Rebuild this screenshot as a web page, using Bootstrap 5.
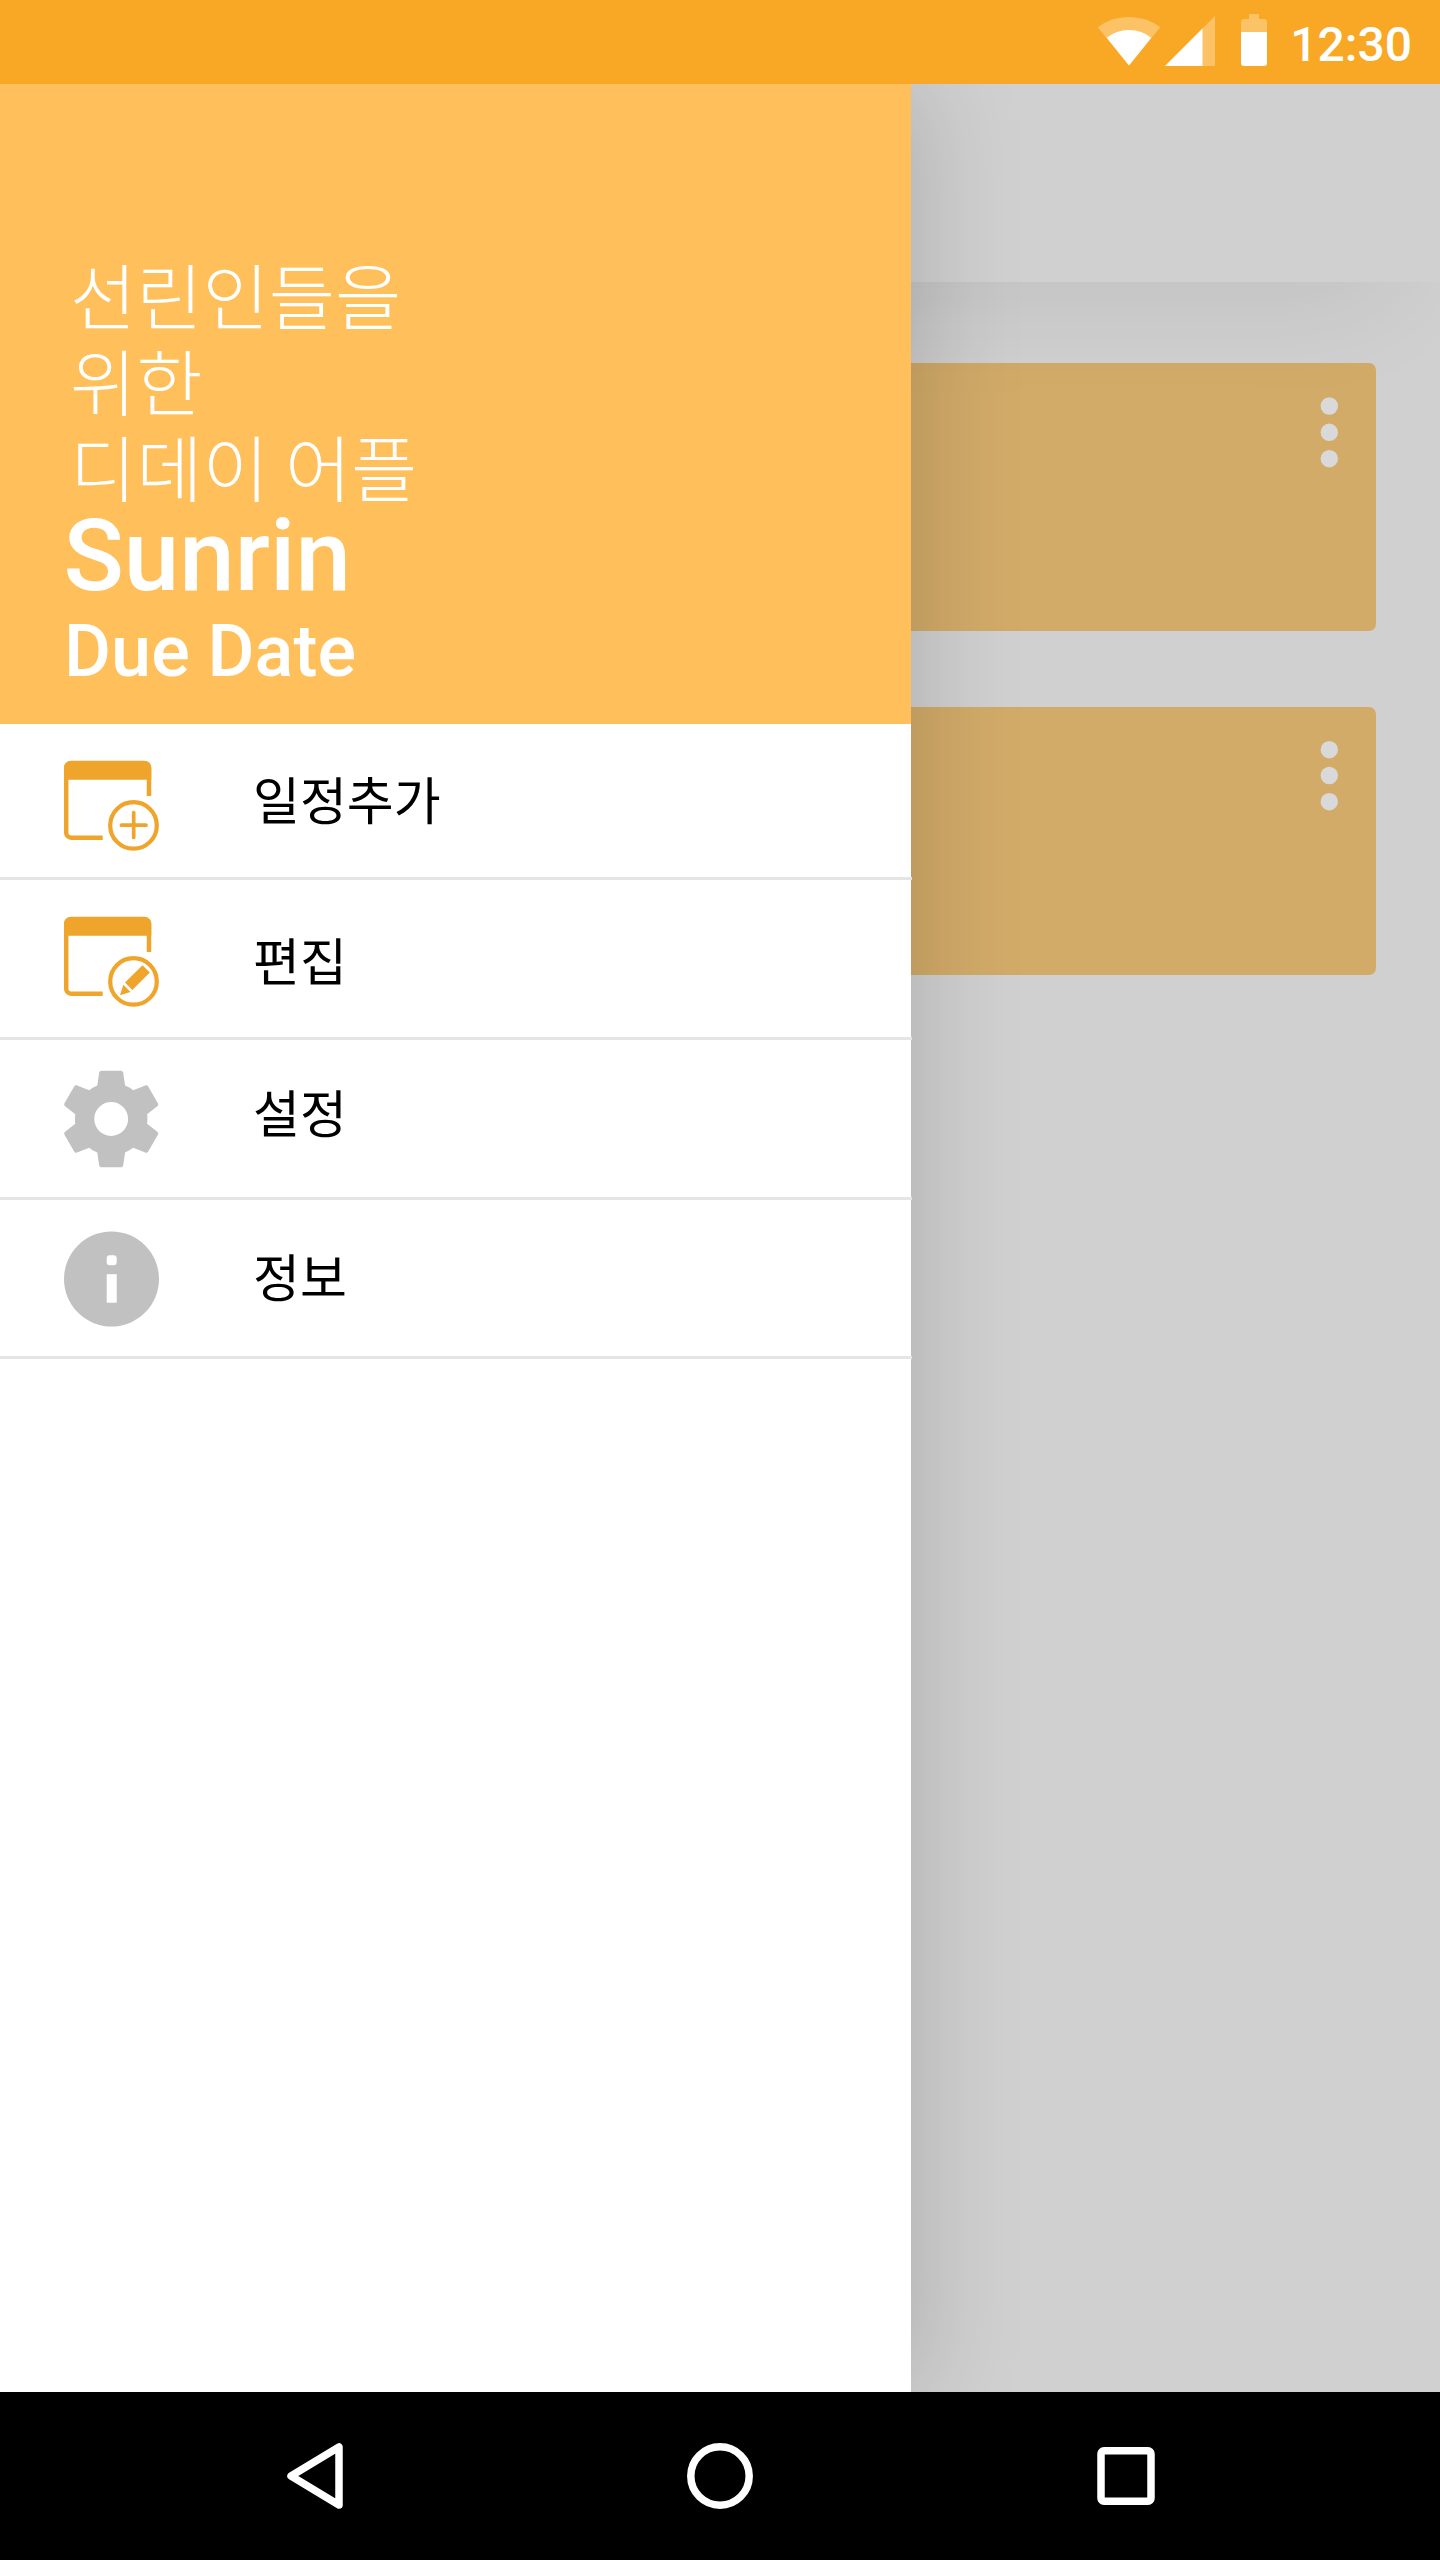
<!DOCTYPE html>
<html lang="ko">
<head>
<meta charset="utf-8">
<meta name="viewport" content="width=device-width, initial-scale=1">
<title>Sunrin Due Date</title>
<link href="https://cdn.jsdelivr.net/npm/bootstrap@5.3.0/dist/css/bootstrap.min.css" rel="stylesheet">
<style>
  body { font-family: Roboto, "Noto Sans CJK KR", sans-serif; background: #d0d0d0; }
  .phone { width: 1440px; height: 2560px; }
  .status-bar { height: 84px; background: #f9a825; padding-right: 28px; }
  .status-time { width: 141px; font-size: 48px; line-height: 84px; padding-top: 3px; }
  .app-bar { height: 198px; background: #d0d0d0; z-index: 1; }
  .bar-shade { position: absolute; top: 198px; left: 0; right: 0; height: 180px; overflow: hidden; pointer-events: none; }
  .bar-shade > div { width: 1390px; height: 198px; margin-top: -198px; box-shadow: 0 10px 120px rgba(0,0,0,.09); }
  .card-stack { padding: 81px 64px 0; gap: 76px; }
  .due-card { height: 268px; border-radius: 7px; background: #d2ab69; padding: 34px 38px 0 0; }
  .dots { width: 18px; }
  .drawer { width: 911px; z-index: 2; box-shadow: 6px 0 100px rgba(0,0,0,.17); }
  .drawer-head { height: 640px; background: #ffbf5a; padding: 166px 0 0 63.5px; }
  .tagline { font-family: "Noto Sans CJK KR", sans-serif; font-weight: 300; font-size: 72px; line-height: 86px; padding-left: 6.5px; word-spacing: -4px; }
  .brand { font-size: 99.7px; line-height: 100px; margin-top: -2px; }
  .brand-sub { font-size: 72px; line-height: 84px; margin-top: 4px; padding-left: .6px; }
  .menu-row { border-bottom: 3px solid #e5e5e5; width: 912px; padding-left: 64px; gap: 93px;
    font-family: "Noto Sans CJK KR", sans-serif; font-size: 51px; line-height: 60px; color: #000; height: 160px; }
  .menu-row svg { width: 96px; height: 98px; flex: none; margin-top: 1px; }
  .menu-row.first { height: 156px; }
  .menu-row.last { height: 159px; }
  .menu-row.first svg { margin-top: 5px; }
  .menu-row.first span, .menu-row.last span { margin-bottom: 6px; }
  .menu-row.settings span { margin-bottom: 16px; }
  .nav-keys { height: 168px; }
</style>
<script src="https://cdn.jsdelivr.net/npm/bootstrap@5.3.0/dist/js/bootstrap.bundle.min.js"></script>
</head>
<body>
<div class="phone d-flex flex-column overflow-hidden">
  <header class="status-bar d-flex justify-content-end text-white flex-shrink-0">
    <svg width="176" height="84" viewBox="1095 0 176 84" fill="#fff">
      <path opacity=".3" d="M1129 65.500L1097.700 27.300Q1111 17 1129 17T1160.300 27.300Z"/>
      <path d="M1129 65.500L1106.700 37.800Q1116 30 1129 30T1151.300 37.800Z"/>
      <path opacity=".3" d="M1165 66L1215 16V66Z"/>
      <path d="M1165 66L1202.500 28.500V66Z"/>
      <path opacity=".3" d="M1249 14h10v5h5a3 3 0 0 1 3 3v10h-26v-10a3 3 0 0 1 3-3h5z"/>
      <path d="M1241 32h26v31a3 3 0 0 1-3 3h-20a3 3 0 0 1-3-3z"/>
    </svg>
    <span class="status-time fw-medium text-end">12:30</span>
  </header>

  <main class="position-relative flex-grow-1 overflow-hidden">
    <div class="app-bar position-relative"><div class="bar-shade"><div></div></div></div>
    <section class="card-stack d-flex flex-column">
      <article class="due-card d-flex justify-content-end">
        <svg class="dots" height="72" viewBox="0 0 18 72" fill="#d9d9d9"><circle cx="9.300" cy="9" r="8.700"/><circle cx="9.300" cy="35.300" r="8.700"/><circle cx="9.300" cy="61.700" r="8.700"/></svg>
      </article>
      <article class="due-card d-flex justify-content-end">
        <svg class="dots" height="72" viewBox="0 0 18 72" fill="#d9d9d9"><circle cx="9.300" cy="8.700" r="8.700"/><circle cx="9.300" cy="34.500" r="8.700"/><circle cx="9.300" cy="60.700" r="8.700"/></svg>
      </article>
    </section>

    <aside class="drawer position-absolute top-0 start-0 h-100 bg-white">
      <div class="drawer-head text-white">
        <div class="tagline">선린인들을<br>위한<br>디데이 어플</div>
        <div class="brand fw-medium">Sunrin</div>
        <div class="brand-sub fw-medium">Due Date</div>
      </div>
      <nav>
        <div class="menu-row first d-flex align-items-center">
          <svg viewBox="64 754 96 98" fill="none" stroke="#efa52b">
            <path stroke-width="4.500" d="M149 796V768a5 5 0 0 0-5-5H71.200a5 5 0 0 0-5 5V832.700a5 5 0 0 0 5 5H102.700"/>
            <path fill="#efa52b" stroke="none" d="M64 779.700V767.500a6.500 6.500 0 0 1 6.500-6.500h74.300a6.500 6.500 0 0 1 6.500 6.500V779.700z"/>
            <circle cx="133.500" cy="825.400" r="23.300" stroke-width="4.200"/>
            <path stroke-width="3.700" stroke-linecap="round" d="M121.500 825.200h24.500M133.700 812.500v25"/>
          </svg>
          <span>일정추가</span>
        </div>
        <div class="menu-row d-flex align-items-center">
          <svg viewBox="64 910 96 98" fill="none" stroke="#efa52b">
            <path stroke-width="4.500" d="M149 952V924a5 5 0 0 0-5-5H71.200a5 5 0 0 0-5 5V988.700a5 5 0 0 0 5 5H102.700"/>
            <path fill="#efa52b" stroke="none" d="M64 935.700V923.500a6.500 6.500 0 0 1 6.500-6.500h74.300a6.500 6.500 0 0 1 6.500 6.500V935.700z"/>
            <circle cx="133.500" cy="981.400" r="23.300" stroke-width="4.200"/>
            <path fill="#efa52b" stroke="none" d="M142.500 965.200L149.800 972.500L132.300 990L125 982.500ZM123.300 984.800L130.500 992L120 995.200Z"/>
          </svg>
          <span>편집</span>
        </div>
        <div class="menu-row settings d-flex align-items-center">
          <svg viewBox="64 1070 96 98" fill="#c1c1c1">
            <path transform="translate(53.200 1061) scale(4.833)" d="M19.430 12.980c.04-.32.07-.64.07-.98s-.03-.66-.07-.98l2.110-1.650c.19-.15.240-.42.120-.64l-2-3.460c-.12-.22-.39-.3-.61-.22l-2.490 1c-.52-.4-1.080-.73-1.690-.98l-.38-2.650C14.460 2.180 14.250 2 14 2h-4c-.25 0-.46.180-.49.420l-.38 2.650c-.61.250-1.170.590-1.690.980l-2.490-1c-.23-.09-.49 0-.61.220l-2 3.460c-.13.220-.07.490.120.640l2.110 1.650c-.04.320-.07.650-.07.980s.03.660.07.980l-2.110 1.650c-.19.150-.24.420-.12.640l2 3.460c.12.220.39.300.61.220l2.490-1c.52.400 1.080.730 1.690.980l.38 2.650c.03.240.24.420.49.420h4c.25 0 .46-.18.490-.42l.38-2.650c.61-.25 1.170-.59 1.690-.98l2.490 1c.23.090.49 0 .61-.22l2-3.460c.12-.22.070-.49-.12-.64l-2.110-1.650zM12 15.500c-1.930 0-3.500-1.570-3.500-3.500s1.570-3.500 3.500-3.500 3.500 1.570 3.500 3.500-1.570 3.500-3.500 3.500z"/>
          </svg>
          <span>설정</span>
        </div>
        <div class="menu-row last d-flex align-items-center">
          <svg viewBox="64 1229.500 96 98" fill="#c1c1c1">
            <circle cx="111.500" cy="1278.500" r="47.500"/>
            <rect x="106.700" y="1254.700" width="10" height="10" rx="3" fill="#fff"/>
            <rect x="106.700" y="1273.700" width="10" height="28.500" fill="#fff"/>
          </svg>
          <span>정보</span>
        </div>
      </nav>
    </aside>
  </main>

  <footer class="nav-keys bg-black flex-shrink-0">
    <svg class="d-block" width="1440" height="168" viewBox="0 2392 1440 168" fill="none" stroke="#fff" stroke-width="7.500">
      <path stroke-linejoin="round" d="M339 2447V2505L291 2476Z"/>
      <circle cx="720" cy="2476" r="29.200"/>
      <rect x="1101" y="2450.700" width="50" height="50.600" rx="3"/>
    </svg>
  </footer>
</div>
</body>
</html>
